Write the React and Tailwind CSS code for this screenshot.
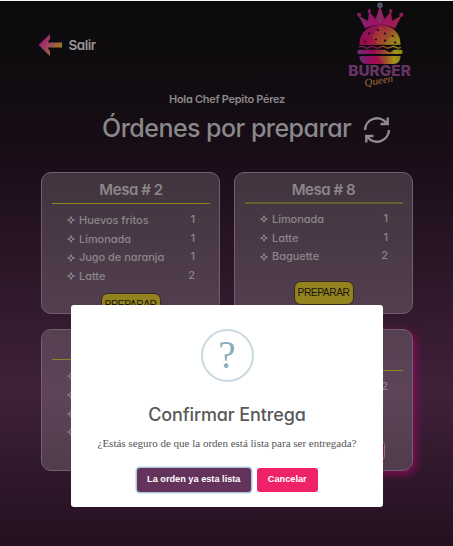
import React from "react";

const tables = [
  {
    title: "Mesa # 2",
    items: [["Huevos fritos", 1], ["Limonada", 1], ["Jugo de naranja", 1], ["Latte", 2]],
  },
  {
    title: "Mesa # 8",
    items: [["Limonada", 1], ["Latte", 1], ["Baguette", 2]],
    thick: true,
  },
  {
    title: "",
    items: [["", ""], ["", ""], ["", ""], ["", ""]],
  },
  {
    title: "",
    items: [["", 2]],
    late: true,
  },
];

function Logo() {
  return (
    <svg width="70" height="90" viewBox="0 0 70 90" className="block">
      <defs>
        <linearGradient id="bun" x1="0" y1="0.2" x2="1" y2="0.7">
          <stop offset="0" stopColor="#7d1760" />
          <stop offset="0.35" stopColor="#98104f" />
          <stop offset="0.65" stopColor="#a04a28" />
          <stop offset="1" stopColor="#998a1c" />
        </linearGradient>
        <linearGradient id="crown" x1="0" x2="1">
          <stop offset="0" stopColor="#7a2869" />
          <stop offset="0.4" stopColor="#9c1068" />
          <stop offset="1" stopColor="#a0224a" />
        </linearGradient>
        <linearGradient id="base" x1="0" x2="1">
          <stop offset="0" stopColor="#6d2c70" />
          <stop offset="0.35" stopColor="#9b0858" />
          <stop offset="0.65" stopColor="#a05226" />
          <stop offset="0.85" stopColor="#a4971a" />
          <stop offset="1" stopColor="#8b801b" />
        </linearGradient>
      </defs>
      <path d="M21 26.5 L14.5 13.5 L24 19 L25 9.5 L31.5 17 L36 4 L40.5 17 L47 9.5 L48 19 L57.5 13.5 L51 26.5 Q36 19 21 26.5Z" fill="url(#crown)" />
      <path d="M33 18 L36 6 L39 18 L36 22Z" fill="#84305f" />
      <g fill="url(#crown)">
        <circle cx="15" cy="12.7" r="2" />
        <circle cx="25.3" cy="9" r="1.7" />
        <circle cx="46.7" cy="9" r="1.7" />
        <circle cx="57.3" cy="12.7" r="2" />
      </g>
      <circle cx="36" cy="3.2" r="2.8" fill="#44636b" />
      <circle cx="36" cy="3.8" r="1.7" fill="#6b4163" />
      <path d="M15.5 42.8 C15.5 29.5 25 23 36 23 C47 23 56.5 29.5 56.5 42.8Z" fill="url(#bun)" />
      <path d="M36 23 L47 33 L38 42.8 L28 35Z" fill="#a34236" opacity=".6" />
      <path d="M16 39 L28 35 L33 42.8 L16 42.8Z" fill="#a10a50" opacity=".7" />
      <path d="M47 33 L56.5 42.8 H43Z" fill="#9a7d24" opacity=".6" />
      <g fill="#150f14">
        <circle cx="34" cy="28" r="1.1" />
        <circle cx="25" cy="31.5" r="1.1" />
        <circle cx="41" cy="31.5" r="1.1" />
        <circle cx="48.5" cy="34" r="1.1" />
        <circle cx="32" cy="37.5" r="1.1" />
        <circle cx="41" cy="38.7" r="1.1" />
        <circle cx="21" cy="39.5" r="1.1" />
        <circle cx="51" cy="40.5" r="1.1" />
      </g>
      <path d="M15 45.3 q2.75 -1.8 5.25 0 t5.25 0 t5.25 0 t5.25 0 t5.25 0 t5.25 0 t5.25 0 t5 0" fill="none" stroke="url(#base)" strokeWidth="1.2" />
      <path d="M15.5 47.7 H41 L46 50.5 L50 47.7 H56.5 a2.2 2.2 0 0 1 0 4.4 H15.5 a2.2 2.2 0 0 1 0 -4.4Z" fill="url(#base)" />
      <path d="M15.5 54 H56.5 C56.5 59 54 62 49 62 H23 C18 62 15.5 59 15.5 54Z" fill="url(#base)" />
      <path d="M24 62 L32 54 L40 62Z" fill="#a30b4e" opacity=".7" />
      <text x="4.3" y="73.5" textLength="62.5" lengthAdjust="spacingAndGlyphs" fontFamily="Inter, sans-serif" fontWeight="800" fontSize="14.5" fill="#673465">BURGER</text>
      <text x="21" y="84.5" transform="rotate(-10 21 84.5)" textLength="29" lengthAdjust="spacingAndGlyphs" fontFamily="'Liberation Serif', serif" fontStyle="italic" fontSize="10.5" fill="#a3693c">Queen</text>
    </svg>
  );
}

function TableCard({ table }) {
  return (
    <section
      className={
        "flex h-[142px] w-[179px] flex-col items-center rounded-[10px] border border-[#706070] bg-white/[0.16] " +
        (table.late ? "pt-[40px] shadow-[3px_3px_9px_#850c55]" : table.title ? "pt-[5px]" : "pt-[29px]")
      }
    >
      {table.title && (
        <h2
          className={
            "shrink-0 text-[15px] leading-[23px] font-semibold tracking-[-0.45px] text-[#8b868a] " +
            (table.thick ? "h-[24px]" : "h-[25px] pl-px")
          }
        >
          {table.title}
        </h2>
      )}
      <div
        className={
          "w-[158px] shrink-0 " + (table.thick ? "h-[2px] bg-[#6c5d2c]" : "h-px bg-[#94831d]")
        }
      />
      <ul
        className={
          "w-[129px] shrink-0 text-[11px] text-[#8c868a] " +
          (table.late ? "h-[57px] pt-[7px]" : table.thick ? "h-[77px] pt-[6px]" : "h-[89px] pt-[7px]")
        }
      >
        {table.items.map(([name, count], i) => (
          <li key={i} className="flex h-[18.7px] items-center">
            <svg width="8" height="8" viewBox="0 0 8 8" className="mr-[4px] ml-px shrink-0">
              <path d="M4 .6 L4.9 3.1 L7.4 4 L4.9 4.9 L4 7.4 L3.1 4.9 L.6 4 L3.1 3.1Z" fill="none" stroke="#918b8f" strokeWidth="1" />
            </svg>
            <span className="font-medium tracking-[-0.05px]">{name}</span>
            <span className="mb-[2px] ml-auto font-medium">{count}</span>
          </li>
        ))}
      </ul>
      {(table.title || table.late) && (
        <button
          className={
            "shrink-0 border font-['Liberation_Sans',sans-serif] text-[10.3px] tracking-[-0.5px] " +
            (table.late
              ? "mt-[12px] h-[21px] w-[122px] rounded-[5px] border-[#857681] bg-[#8a1744]"
              : "h-[24px] w-[60px] rounded-[7px] border-[#3a2a1c] bg-[#93831f] text-[#1b150e]")
          }
        >
          {table.late ? "" : "PREPARAR"}
        </button>
      )}
    </section>
  );
}

export default function App() {
  return (
    <div className="relative h-[546px] w-[453px] overflow-hidden border-t border-[#f0fbf7] bg-[linear-gradient(180deg,#0b0b0b_0%,#100c10_14%,#1a0d18_29%,#3f213a_72%,#2f182b_86%,#251022_100%)] font-['Inter',sans-serif] text-[#8b888a] [font-feature-settings:'cv11']">
      <header className="flex h-[90px] items-start justify-between pr-[38px] pl-[38px]">
        <div className="flex items-center pt-[33px]">
          <svg width="24" height="23" viewBox="0 0 24 23">
            <defs>
              <linearGradient id="arrow" x1="0" y1="0" x2="1" y2=".7">
                <stop offset="0.1" stopColor="#9a1080" />
                <stop offset="0.45" stopColor="#a03c66" />
                <stop offset="1" stopColor="#9d8414" />
              </linearGradient>
            </defs>
            <path d="M.6 11 L12 0 V5 Q10 7 10 8.5 H24 V13.5 H10 Q10 15 12 17 V22 Z" fill="url(#arrow)" />
          </svg>
          <span className="ml-[6.5px] text-[13.5px] font-semibold tracking-[-0.5px] text-[#979596]">Salir</span>
        </div>
        <div className="w-[71px] pt-px"><Logo /></div>
      </header>
      <p className="h-[17px] pl-[1px] text-center text-[11px] leading-[17px] font-semibold tracking-[-0.3px]">Hola Chef Pepito Pérez</p>
      <div className="flex h-[42px] items-center pl-[102px]">
        <h1 className="w-[261px] pb-[2px] text-[25px] leading-[40px] font-medium tracking-[-0.53px] whitespace-nowrap">Órdenes por preparar</h1>
        <svg width="28" height="28" viewBox="0 0 28 28" fill="none" stroke="#8f8c8f" strokeWidth="2.4" className="mt-[1px]">
          <path d="M2 14 A12 12 0 0 1 23.5 7 M24.7 1.5 V8 H17.5 M26 14 A12 12 0 0 1 4.5 21 M3.3 26.5 V20 H10.5" />
        </svg>
      </div>
      <main className="mt-[22px] ml-[41px] grid w-[372px] grid-cols-2 justify-items-start gap-x-[14px] gap-y-[15px]">
        {tables.map((table, i) => (
          <div key={i} className={i % 2 ? "justify-self-end" : ""}>
            <TableCard table={table} />
          </div>
        ))}
      </main>

      <div role="dialog" className="absolute top-[303.5px] left-[71px] flex h-[202.5px] w-[312px] flex-col items-center rounded-[3px] bg-white pt-[24.5px]">
        <div className="flex h-[53px] w-[53px] items-center justify-center rounded-full border-2 border-[#c9dae1] font-['Liberation_Serif',serif] text-[39px] text-[#87adbd]">
          ?
        </div>
        <h2 className="mt-[20px] h-[26px] text-[18px] leading-[26px] font-medium tracking-[-0.12px] whitespace-nowrap text-[#595959]">Confirmar Entrega</h2>
        <p className="mt-[8px] h-[16px] font-['Liberation_Serif',serif] text-[11px] leading-[15px] whitespace-nowrap text-[#545454]">
          ¿Estás seguro de que la orden está lista para ser entregada?
        </p>
        <div className="mt-[16px] flex gap-[6px] font-['Liberation_Sans',sans-serif] text-[9.2px] font-bold whitespace-nowrap text-white">
          <button className="h-[23.5px] w-[114.5px] rounded-[3px] bg-[#64335c] shadow-[0_0_0_1.5px_#b1c9e3]">La orden ya esta lista</button>
          <button className="h-[23.5px] w-[60.5px] rounded-[3px] bg-[#ee2268]">Cancelar</button>
        </div>
      </div>
    </div>
  );
}
